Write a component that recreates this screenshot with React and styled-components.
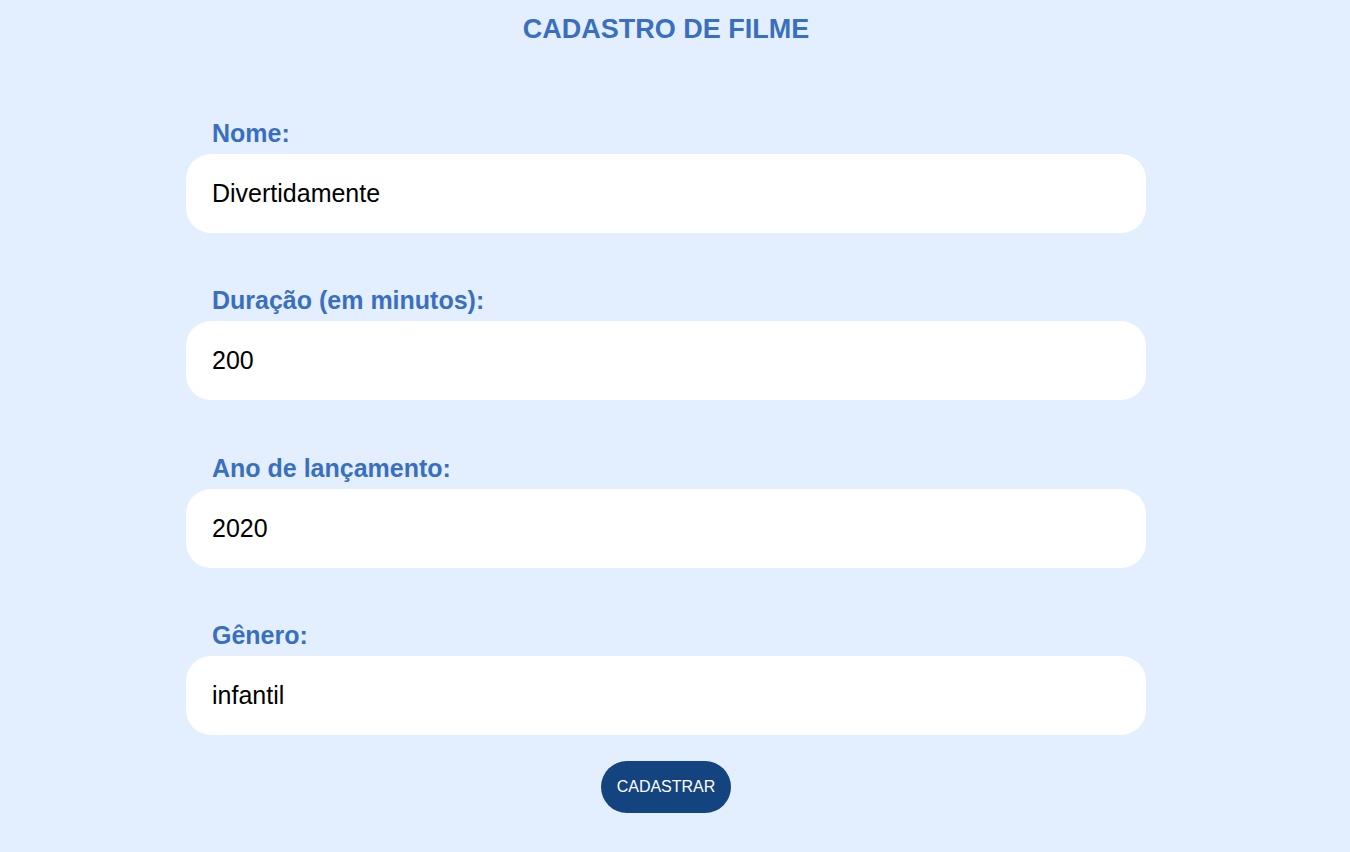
import styled, { createGlobalStyle } from "styled-components";

const GlobalStyle = createGlobalStyle`
  body {
    margin: 0;
    background-color: #e3effe;
    font-family: "Liberation Sans", Arial, sans-serif;
  }
`;

const campos = [
  { id: "nome", label: "Nome:", value: "Divertidamente" },
  { id: "duracao", label: "Duração (em minutos):", value: "200" },
  { id: "ano", label: "Ano de lançamento:", value: "2020" },
  { id: "genero", label: "Gênero:", value: "infantil" },
];

const App = () => {
  return (
    <Page>
      <GlobalStyle />
      <Title>CADASTRO DE FILME</Title>
      <Form onSubmit={(e) => e.preventDefault()}>
        {campos.map((c) => (
          <Field key={c.id}>
            <Label htmlFor={c.id}>{c.label}</Label>
            <Input id={c.id} defaultValue={c.value} />
          </Field>
        ))}
        <Button type="submit">CADASTRAR</Button>
      </Form>
    </Page>
  );
};

const Page = styled.div`
  min-height: 852px;
  box-sizing: border-box;
  padding-right: 18px;
  padding-top: 14px;
  display: flex;
  flex-direction: column;
  align-items: center;
`;

const Title = styled.h1`
  margin: 0;
  font-size: 27px;
  line-height: 31px;
  font-weight: bold;
  color: #3a6fc0;
`;

const Form = styled.form`
  width: 960px;
  margin-top: 74px;
  display: flex;
  flex-direction: column;
  align-items: center;
`;

const Field = styled.div`
  width: 100%;
  display: flex;
  flex-direction: column;
  gap: 7px;
  margin-bottom: 53.4px;
  &:nth-last-child(2) {
    margin-bottom: 26px;
  }
`;

const Label = styled.label`
  padding-left: 26px;
  font-size: 25px;
  line-height: 28px;
  font-weight: bold;
  color: #3a6fc0;
`;

const Input = styled.input`
  box-sizing: border-box;
  width: 100%;
  height: 79px;
  border: none;
  outline: none;
  border-radius: 25px;
  background: #ffffff;
  padding: 0 26px;
  font-family: "Liberation Sans", Arial, sans-serif;
  font-size: 25px;
  color: #000;
`;

const Button = styled.button`
  width: 130px;
  height: 52px;
  border: none;
  border-radius: 26px;
  background-color: #134480;
  color: #ffffff;
  font-family: "Liberation Sans", Arial, sans-serif;
  font-size: 16px;
  cursor: pointer;
`;

export default App;
